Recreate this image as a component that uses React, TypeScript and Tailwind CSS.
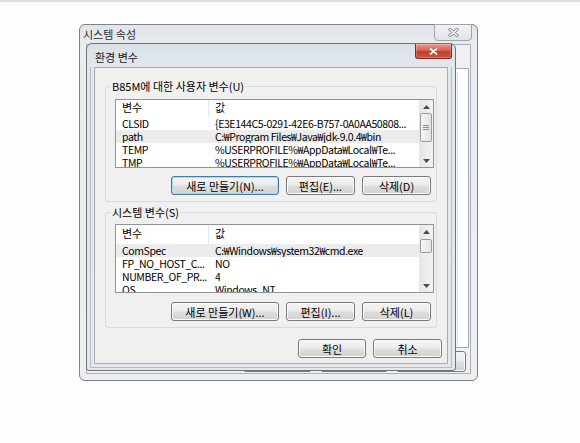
import React from "react";

type Row = [string, string];

const userRows: Row[] = [
  ["CLSID", "{E3E144C5-0291-42E6-B757-0A0AA50808..."],
  ["path", "C:₩Program Files₩Java₩jdk-9.0.4₩bin"],
  ["TEMP", "%USERPROFILE%₩AppData₩Local₩Te..."],
  ["TMP", "%USERPROFILE%₩AppData₩Local₩Te..."],
];

const sysRows: Row[] = [
  ["ComSpec", "C:₩Windows₩system32₩cmd.exe"],
  ["FP_NO_HOST_C...", "NO"],
  ["NUMBER_OF_PR...", "4"],
  ["OS", "Windows_NT"],
];

function Arrow({ down }: { down?: boolean }) {
  return (
    <div className="h-[13px] shrink-0 flex items-center justify-center">
      <svg width="7" height="4" viewBox="0 0 7 4">
        <path d={down ? "M0 0H7L3.5 4Z" : "M0 4H7L3.5 0Z"} fill="#4a4a4a" />
      </svg>
    </div>
  );
}

function Scrollbar({ thumbClass, grip }: { thumbClass: string; grip?: boolean }) {
  return (
    <div className="w-[14px] shrink-0 flex flex-col bg-[linear-gradient(to_right,#e6e6e6,#f3f3f3)]">
      <Arrow />
      <div className="flex-1 flex flex-col">
        <div
          className={
            "mx-[1px] rounded-[2px] border border-[#9b9b9b] bg-[linear-gradient(to_right,#f7f7f7,#e2e2e2)] flex flex-col items-center justify-center gap-[1px] " +
            thumbClass
          }
        >
          {grip && (
            <>
              <div className="w-[6px] h-px bg-[#8a8a8a]" />
              <div className="w-[6px] h-px bg-[#8a8a8a]" />
              <div className="w-[6px] h-px bg-[#8a8a8a]" />
            </>
          )}
        </div>
      </div>
      <Arrow down />
    </div>
  );
}

function ListView({
  rows,
  selected,
  thumbClass,
  grip,
  topClass,
  headClass,
}: {
  rows: Row[];
  selected: number;
  thumbClass: string;
  grip?: boolean;
  topClass: string;
  headClass: string;
}) {
  return (
    <div className={"h-[69px] min-w-0 border border-[#8e949b] bg-white flex overflow-hidden " + topClass}>
      <div className="flex-1 min-w-0 flex flex-col overflow-hidden">
        <div className={"shrink-0 flex text-[11px] leading-[15px] text-black " + headClass}>
          <div className="w-[93px] shrink-0 pl-[6px] border-r border-[#e4e7ea]">변수</div>
          <div className="pl-[6px]">값</div>
        </div>
        {rows.map((r, i) => (
          <div
            key={i}
            className={
              "h-[13px] shrink-0 flex text-[10.5px] leading-[13px] tracking-[-0.4px] text-black " +
              (i === selected ? "bg-[#ececec]" : "")
            }
          >
            <div className="w-[93px] shrink-0 pl-[6px] whitespace-nowrap overflow-hidden">{r[0]}</div>
            <div className="min-w-0 pl-[6px] whitespace-nowrap overflow-hidden">{r[1]}</div>
          </div>
        ))}
      </div>
      <Scrollbar thumbClass={thumbClass} grip={grip} />
    </div>
  );
}

function Btn({
  children,
  wClass,
  focus,
  hClass,
}: {
  children?: React.ReactNode;
  wClass: string;
  focus?: boolean;
  hClass?: string;
}) {
  return (
    <div
      className={
        "shrink-0 rounded-[3px] border flex items-center justify-center text-[11px] leading-[14px] text-black bg-[linear-gradient(to_bottom,#f4f4f4_0%,#ececec_48%,#dedede_52%,#d2d2d2_100%)] " +
        (focus
          ? "border-[#3f7cab] shadow-[inset_0_0_0_1px_#a9d8f3] "
          : "border-[#7a7a7a] shadow-[inset_0_0_0_1px_#fafafa] ") +
        wClass +
        " " +
        (hClass ?? "h-[19px]")
      }
    >
      {children}
    </div>
  );
}

export default function App() {
  return (
    <div className="relative w-[580px] h-[443px] bg-[#fdfdfd] overflow-hidden [font-family:'Noto_Sans_CJK_KR','Noto_Sans',sans-serif]">
      <div className="h-[2px] bg-[#d3e1ea]" />

      {/* Outer window: 시스템 속성 */}
      <div className="absolute left-[79px] top-[24px] w-[399px] h-[357px] rounded-[6px] border border-[#7e8388] bg-[linear-gradient(to_bottom,#e2e5e8,#eaecee_22px,#eceef0)] flex flex-col">
        <div className="relative h-[19px] shrink-0">
          <div className="pl-[3px] pt-[2px] text-[11px] leading-[14px] text-[#2e2e2e]">시스템 속성</div>
          <div className="absolute right-[5px] top-[-1px] w-[38px] h-[17px] rounded-b-[4px] border border-[#a0a5ab] bg-[linear-gradient(to_bottom,#f1f2f4,#e1e4e7)] flex items-center justify-center">
            <svg width="11" height="9" viewBox="0 0 11 9">
              <path d="M2 1.5L9 7.5M9 1.5L2 7.5" stroke="#8d9298" strokeWidth="3.2" strokeLinecap="round" />
              <path d="M2 1.5L9 7.5M9 1.5L2 7.5" stroke="#f7f7f7" strokeWidth="1.3" strokeLinecap="round" />
            </svg>
          </div>
        </div>
        <div className="flex-1 mx-[6px] mb-[6px] border border-[#aab1b8] bg-[#f0f0f0] flex flex-col pt-[23px] pl-[7px] pr-[1px] pb-[1px]">
          <div className="flex-1 border border-[#a2a9b0] bg-white flex justify-end pt-[3px] pr-[10px]">
            <div className="w-[40px] border-r border-[#d3dbe1]" />
          </div>
          <div className="mt-[3px] flex justify-end gap-[8px] pr-[3px]">
            <Btn wClass="w-[69px]" hClass="h-[21px]" />
            <Btn wClass="w-[68px]" hClass="h-[21px]" />
            <Btn wClass="w-[70px]" hClass="h-[21px]" />
          </div>
        </div>
      </div>

      {/* Inner dialog: 환경 변수 */}
      <div className="absolute left-[86px] top-[43px] w-[370px] h-[328px] rounded-t-[6px] rounded-b-[3px] border border-[#6c747c] bg-[linear-gradient(to_bottom,#d9e1e8,#e2e7ec_23px,#e4e8ec)] flex flex-col">
        <div className="relative h-[23px] shrink-0">
          <div className="pl-[8px] pt-[6px] text-[11px] leading-[14px] text-[#111111]">환경 변수</div>
          <div className="absolute right-[3px] top-0 w-[37px] h-[15px] rounded-b-[3px] border border-t-0 border-[#7e2a1f] bg-[linear-gradient(to_bottom,#e69a8f,#d66453_45%,#c23d2c_55%,#cb5443)] shadow-[inset_0_0_0_1px_rgba(255,255,255,0.22)] flex items-center justify-center">
            <svg width="9" height="7" viewBox="0 0 9 7">
              <path d="M1.5 1L7.5 6M7.5 1L1.5 6" stroke="#7a2418" strokeWidth="2.6" strokeLinecap="round" opacity="0.35" />
              <path d="M1.5 1L7.5 6M7.5 1L1.5 6" stroke="#ffffff" strokeWidth="1.8" strokeLinecap="round" />
            </svg>
          </div>
        </div>
        <div className="flex-1 min-w-0 mx-[3px] mb-[2px] border-x border-b border-[#b5bdc5] px-[3px] pb-[3px] flex flex-col">
          <div className="flex-1 min-w-0 border border-[#a3acb5] bg-[#f0f0f0] px-[10px] pt-[12px] flex flex-col">
            <fieldset className="min-w-0 border border-[#d3dbe1] rounded-[3px] pl-[9px] pr-[2px] pb-[6px]">
              <legend className="ml-[-5px] px-[2px] text-[11px] leading-[12px] text-black">B85M에 대한 사용자 변수(U)</legend>
              <ListView rows={userRows} selected={1} thumbClass="h-[29px]" grip topClass="mt-[7px]" headClass="h-[17px]" />
              <div className="mt-[8px] mr-[3px] flex justify-end gap-[7px]">
                <Btn wClass="w-[108px]" focus>새로 만들기(N)...</Btn>
                <Btn wClass="w-[69px]">편집(E)...</Btn>
                <Btn wClass="w-[69px]">삭제(D)</Btn>
              </div>
            </fieldset>

            <fieldset className="min-w-0 mt-[4px] border border-[#d3dbe1] rounded-[3px] pl-[9px] pr-[2px] pb-[6px]">
              <legend className="ml-[-5px] px-[2px] text-[11px] leading-[12px] text-black">시스템 변수(S)</legend>
              <ListView rows={sysRows} selected={0} thumbClass="mt-[1px] h-[14px]" topClass="mt-[6px]" headClass="h-[19px] pt-[1px]" />
              <div className="mt-[9px] mr-[3px] flex justify-end gap-[7px]">
                <Btn wClass="w-[108px]">새로 만들기(W)...</Btn>
                <Btn wClass="w-[69px]">편집(I)...</Btn>
                <Btn wClass="w-[69px]">삭제(L)</Btn>
              </div>
            </fieldset>

            <div className="mt-[11px] -mr-[5px] flex justify-end gap-[7px]">
              <Btn wClass="w-[68px]">확인</Btn>
              <Btn wClass="w-[69px]">취소</Btn>
            </div>
          </div>
        </div>
      </div>
    </div>
  );
}
